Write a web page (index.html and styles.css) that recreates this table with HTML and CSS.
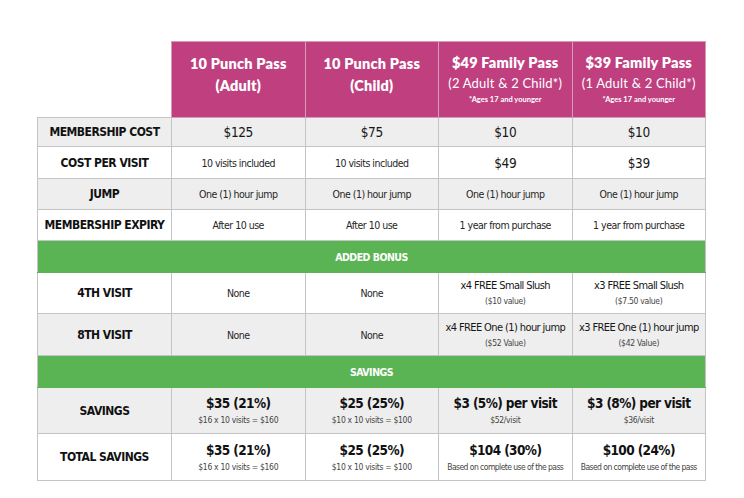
FILE: index.html
```html
<!DOCTYPE html>
<html>
<head>
<meta charset="utf-8">
<link rel="stylesheet" href="styles.css">
</head>
<body>
<table class="pricing">
  <colgroup>
    <col class="c-label"><col class="c-val"><col class="c-val"><col class="c-val"><col class="c-val">
  </colgroup>
  <thead>
    <tr class="head">
      <th class="blank"></th>
      <th class="two"><div class="h-title">10 Punch Pass</div><div class="h-title">(Adult)</div></th>
      <th class="two"><div class="h-title">10 Punch Pass</div><div class="h-title">(Child)</div></th>
      <th><div class="h-title">$49 Family Pass</div><div class="h-sub">(2 Adult &amp; 2 Child*)</div><div class="h-note">*Ages 17 and younger</div></th>
      <th><div class="h-title">$39 Family Pass</div><div class="h-sub">(1 Adult &amp; 2 Child*)</div><div class="h-note">*Ages 17 and younger</div></th>
    </tr>
  </thead>
  <tbody>
    <tr class="gray r-cost">
      <td class="label">MEMBERSHIP COST</td>
      <td class="price">$125</td><td class="price">$75</td><td class="price">$10</td><td class="price">$10</td>
    </tr>
    <tr class="white r-visit">
      <td class="label">COST PER VISIT</td>
      <td class="plain">10 visits included</td><td class="plain">10 visits included</td><td class="price">$49</td><td class="price">$39</td>
    </tr>
    <tr class="gray r-jump">
      <td class="label">JUMP</td>
      <td class="plain">One (1) hour jump</td><td class="plain">One (1) hour jump</td><td class="plain">One (1) hour jump</td><td class="plain">One (1) hour jump</td>
    </tr>
    <tr class="white r-exp">
      <td class="label">MEMBERSHIP EXPIRY</td>
      <td class="plain">After 10 use</td><td class="plain">After 10 use</td><td class="plain">1 year from purchase</td><td class="plain">1 year from purchase</td>
    </tr>
    <tr class="band">
      <td colspan="5">ADDED BONUS</td>
    </tr>
    <tr class="white r-bonus">
      <td class="label">4TH VISIT</td>
      <td class="plain">None</td><td class="plain">None</td>
      <td><div class="main">x4 FREE Small Slush</div><div class="small">($10 value)</div></td>
      <td><div class="main">x3 FREE Small Slush</div><div class="small">($7.50 value)</div></td>
    </tr>
    <tr class="gray r-bonus2">
      <td class="label">8TH VISIT</td>
      <td class="plain">None</td><td class="plain">None</td>
      <td><div class="main">x4 FREE One (1) hour jump</div><div class="small">($52 Value)</div></td>
      <td><div class="main">x3 FREE One (1) hour jump</div><div class="small">($42 Value)</div></td>
    </tr>
    <tr class="band">
      <td colspan="5">SAVINGS</td>
    </tr>
    <tr class="gray r-sav">
      <td class="label">SAVINGS</td>
      <td><div class="big">$35 (21%)</div><div class="small">$16 x 10 visits = $160</div></td>
      <td><div class="big">$25 (25%)</div><div class="small">$10 x 10 visits = $100</div></td>
      <td><div class="big">$3 (5%) per visit</div><div class="small">$52/visit</div></td>
      <td><div class="big">$3 (8%) per visit</div><div class="small">$36/visit</div></td>
    </tr>
    <tr class="white r-tot">
      <td class="label">TOTAL SAVINGS</td>
      <td><div class="big">$35 (21%)</div><div class="small">$16 x 10 visits = $160</div></td>
      <td><div class="big">$25 (25%)</div><div class="small">$10 x 10 visits = $100</div></td>
      <td><div class="big">$104 (30%)</div><div class="small tight">Based on complete use of the pass</div></td>
      <td><div class="big">$100 (24%)</div><div class="small tight">Based on complete use of the pass</div></td>
    </tr>
  </tbody>
</table>
</body>
</html>
```

FILE: styles.css
```css
html, body {
  margin: 0;
  background: #ffffff;
}
body {
  padding: 41px 0 0 37px;
  font-family: "DejaVu Sans Condensed", "DejaVu Sans", sans-serif;
  font-stretch: condensed;
  color: #1a1a1a;
}
.pricing {
  border-collapse: collapse;
  table-layout: fixed;
  width: 668px;
}
.c-label { width: 134px; }
.c-val { width: 133.5px; }

.pricing td, .pricing th {
  border: 1px solid #c4c4c4;
  text-align: center;
  vertical-align: middle;
  padding: 0;
  white-space: nowrap;
  overflow: hidden;
}

.head th {
  background: #c0407f;
  color: #ffffff;
  height: 75px;
  font-family: "Lato", "Open Sans", sans-serif;
  font-stretch: normal;
  border-color: #d49ab8;
}
.head th.two {
  padding-bottom: 10px;
  height: 65px;
}
.head th.blank {
  background: #ffffff;
  border: none;
  border-bottom: 1px solid #c4c4c4;
}
.h-title {
  font-weight: 800;
  font-size: 14.5px;
  line-height: 22px;
  letter-spacing: 0.2px;
}
.h-sub {
  font-weight: 400;
  font-size: 13px;
  line-height: 18px;
  letter-spacing: 0.2px;
}
.h-note {
  font-weight: 700;
  font-size: 7.5px;
  line-height: 16px;
}

.gray td { background: #eeeeee; }
.white td { background: #ffffff; }

.label {
  font-weight: 700;
  font-size: 12px;
  color: #111111;
  letter-spacing: -0.5px;
}
.price {
  font-size: 13.5px;
  font-weight: 400;
  color: #161616;
  letter-spacing: -0.4px;
}
.plain {
  font-size: 10.5px;
  color: #262626;
  letter-spacing: -0.5px;
}

.r-cost td { height: 28px; }
.r-visit td { height: 31px; }
.r-jump td { height: 30px; }
.r-exp td { height: 30px; }
.r-bonus td { height: 40px; }
.r-bonus2 td { height: 41px; }
.r-sav td { height: 45px; }
.r-tot td { height: 46px; }

.band td {
  background: #5ab454;
  color: #ffffff;
  font-weight: 700;
  font-size: 10.5px;
  letter-spacing: -0.5px;
  height: 31px;
  border-color: #5ab454;
  border-left-color: #c4c4c4;
  border-right-color: #c4c4c4;
}

.main {
  font-size: 11px;
  font-weight: 400;
  color: #161616;
  line-height: 16px;
  letter-spacing: -0.6px;
}
.big {
  font-size: 13.5px;
  font-weight: 700;
  color: #111111;
  line-height: 19px;
  letter-spacing: -0.6px;
}
.small {
  font-size: 8.5px;
  color: #444444;
  line-height: 14px;
  letter-spacing: -0.3px;
}
.small.tight {
  letter-spacing: -0.55px;
}
```
